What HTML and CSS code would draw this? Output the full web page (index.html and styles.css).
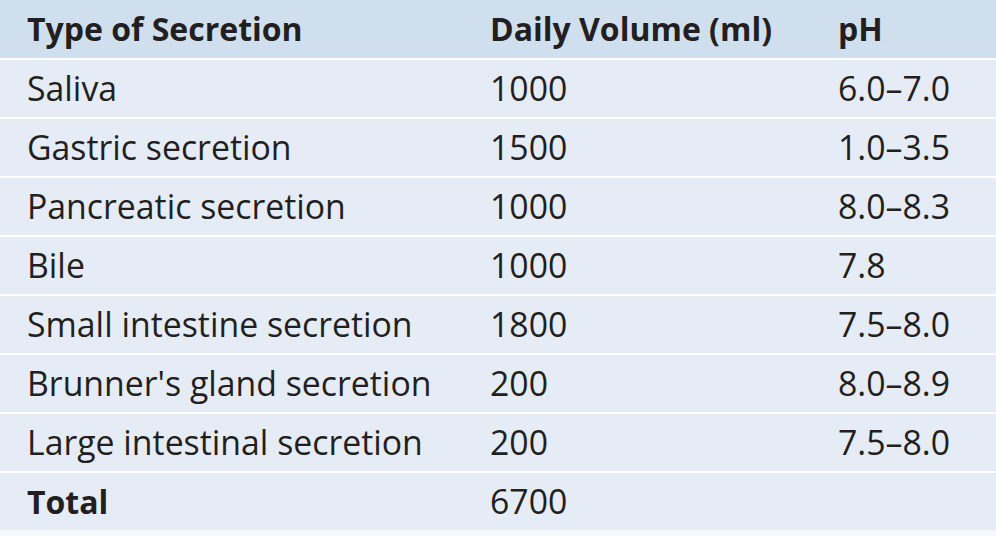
FILE: index.html
```html
<!DOCTYPE html>
<html>
<head>
<meta charset="utf-8">
<link rel="stylesheet" href="styles.css">
</head>
<body>
<div class="table">
  <div class="row head"><div>Type of Secretion</div><div>Daily Volume (ml)</div><div>pH</div></div>
  <div class="row"><div>Saliva</div><div>1000</div><div>6.0–7.0</div></div>
  <div class="row"><div>Gastric secretion</div><div>1500</div><div>1.0–3.5</div></div>
  <div class="row"><div>Pancreatic secretion</div><div>1000</div><div>8.0–8.3</div></div>
  <div class="row"><div>Bile</div><div>1000</div><div>7.8</div></div>
  <div class="row"><div>Small intestine secretion</div><div>1800</div><div>7.5–8.0</div></div>
  <div class="row"><div>Brunner's gland secretion</div><div>200</div><div>8.0–8.9</div></div>
  <div class="row"><div>Large intestinal secretion</div><div>200</div><div>7.5–8.0</div></div>
  <div class="row total"><div>Total</div><div>6700</div><div></div></div>
</div>
</body>
</html>
```
FILE: styles.css
```css
html, body {
  margin: 0;
  padding: 0;
  background: #f4f7fb;
}
.table {
  width: 996px;
  display: flex;
  flex-direction: column;
  gap: 2px;
  background: #ffffff;
  font-family: "Open Sans", "Noto Sans", sans-serif;
  color: #231f20;
  font-size: 33.8px;
}
.row {
  display: grid;
  grid-template-columns: 463px 348px 1fr;
  align-items: center;
  height: 57px;
  padding-left: 27px;
  background: #e5ecf5;
  line-height: 1;
}
.row.head {
  height: 58px;
  background: #cfdfee;
  font-weight: 700;
  font-size: 32px;
}
.row.total div:first-child {
  font-weight: 700;
  font-size: 32px;
}
```
